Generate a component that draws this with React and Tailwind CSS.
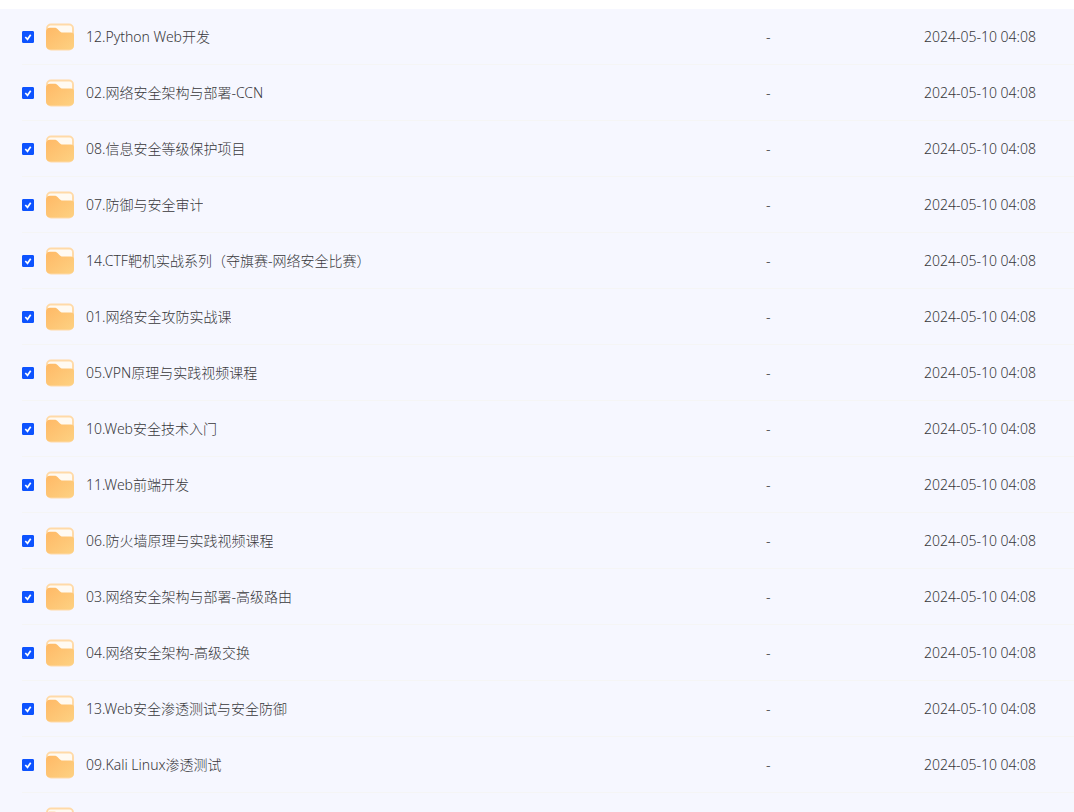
const files = [
  { name: '12.Python Web开发', size: '-', date: '2024-05-10 04:08' },
  { name: '02.网络安全架构与部署-CCN', size: '-', date: '2024-05-10 04:08' },
  { name: '08.信息安全等级保护项目', size: '-', date: '2024-05-10 04:08' },
  { name: '07.防御与安全审计', size: '-', date: '2024-05-10 04:08' },
  { name: '14.CTF靶机实战系列（夺旗赛-网络安全比赛）', size: '-', date: '2024-05-10 04:08' },
  { name: '01.网络安全攻防实战课', size: '-', date: '2024-05-10 04:08' },
  { name: '05.VPN原理与实践视频课程', size: '-', date: '2024-05-10 04:08' },
  { name: '10.Web安全技术入门', size: '-', date: '2024-05-10 04:08' },
  { name: '11.Web前端开发', size: '-', date: '2024-05-10 04:08' },
  { name: '06.防火墙原理与实践视频课程', size: '-', date: '2024-05-10 04:08' },
  { name: '03.网络安全架构与部署-高级路由', size: '-', date: '2024-05-10 04:08' },
  { name: '04.网络安全架构-高级交换', size: '-', date: '2024-05-10 04:08' },
  { name: '13.Web安全渗透测试与安全防御', size: '-', date: '2024-05-10 04:08' },
  { name: '09.Kali Linux渗透测试', size: '-', date: '2024-05-10 04:08' },
];

function FolderIcon() {
  return (
    <svg className="w-7 h-7 shrink-0" viewBox="0 0 28 28" aria-hidden="true">
      <defs>
        <linearGradient id="folder-front" x1="0" y1="0" x2="1" y2="1">
          <stop offset="0" stopColor="#ffb966" />
          <stop offset="1" stopColor="#fdd182" />
        </linearGradient>
      </defs>
      <rect x="0" y="0.600" width="28" height="26.800" rx="5" fill="#ffdaa8" />
      <rect x="2" y="2.600" width="24" height="14" rx="2.500" fill="#fffaf2" />
      <path
        d="M0 9.200c0-2.800 1.500-4.400 4-4.400h4.400c1.300 0 2.200.4 3.100 1.200l2.200 2.200c.9.900 1.700 1.300 3 1.300H25c2 0 3 1 3 3V22c0 3-1.800 4.600-4.700 4.600H4.700C1.800 26.600 0 25 0 22Z"
        fill="url(#folder-front)"
      />
    </svg>
  );
}

function CheckBox({ id }) {
  return (
    <span className="grid shrink-0">
      <input
        id={id}
        type="checkbox"
        defaultChecked
        className="peer col-start-1 row-start-1 w-3 h-3 appearance-none rounded-[1px] border border-[#0d53ff] bg-white checked:bg-[#0d53ff] cursor-pointer"
      />
      <svg
        className="col-start-1 row-start-1 w-3 h-3 invisible peer-checked:visible pointer-events-none"
        viewBox="0 0 12 12"
        fill="none"
        aria-hidden="true"
      >
        <path d="M3.300 6l2.200 2.300L8.700 3.700" stroke="#fff" strokeWidth="1.700" />
      </svg>
    </span>
  );
}

function FileRow({ file, index }) {
  const id = `file-${index}`;
  return (
    <tr className="h-14">
      <td className="p-0 border-b border-[#f5f5f5]">
        <div className="flex items-center">
          <CheckBox id={id} />
          <span className="ml-3">
            <FolderIcon />
          </span>
          <label htmlFor={id} className="ml-3 truncate cursor-pointer">{file.name}</label>
        </div>
      </td>
      <td className="w-[158px] p-0 border-b border-[#f5f5f5]">{file.size}</td>
      <td className="w-[150px] p-0 border-b border-[#f5f5f5] whitespace-nowrap">{file.date}</td>
    </tr>
  );
}

export default function App() {
  return (
    <main className="h-screen overflow-hidden bg-white pt-[9px] text-sm font-light text-[#38383b] font-['Noto_Sans','Noto_Sans_CJK_SC',sans-serif]">
      <div className="min-h-full bg-[#f6f7ff] pl-[22px]">
        <table className="w-full border-separate border-spacing-0">
          <tbody>
            {files.map((file, i) => (
              <FileRow key={file.name} file={file} index={i} />
            ))}
          </tbody>
        </table>
        {/* next folder, cut off by the bottom of the list */}
        <div className="flex h-14 items-center pl-6">
          <FolderIcon />
        </div>
      </div>
    </main>
  );
}
